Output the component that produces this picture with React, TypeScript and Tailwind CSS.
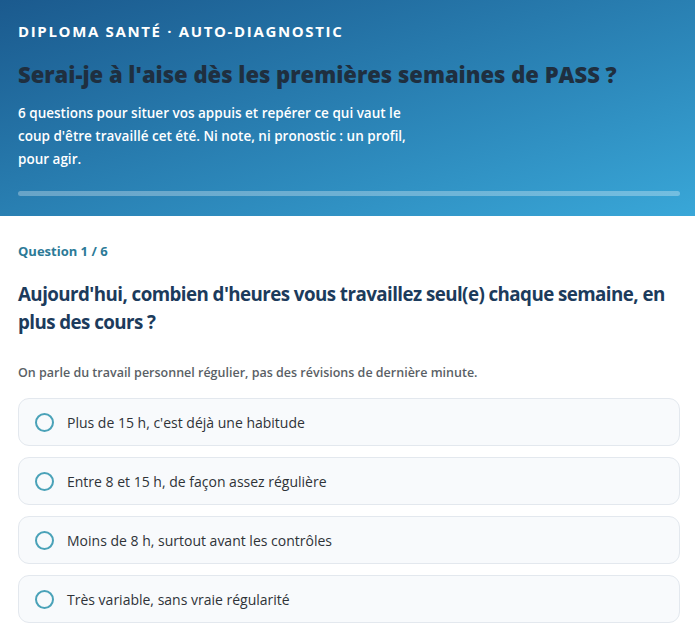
const options = [
  "Plus de 15 h, c'est déjà une habitude",
  'Entre 8 et 15 h, de façon assez régulière',
  'Moins de 8 h, surtout avant les contrôles',
  'Très variable, sans vraie régularité',
]

export default function App() {
  return (
    <div className="min-h-screen bg-white font-['Open_Sans',sans-serif]">
      <header className="h-[216px] bg-gradient-to-br from-[#1b5a8e] to-[#39a7d8] pl-[18px] pr-[15px] pt-[21px]">
        <div className="text-[15px] font-bold leading-5 tracking-[0.11em] text-white">
          DIPLOMA SANTÉ · AUTO-DIAGNOSTIC
        </div>
        <h1 className="mt-[19px] text-[22px] font-extrabold leading-7 text-[#1f2f3f]">
          Serai-je à l'aise dès les premières semaines de PASS ?
        </h1>
        <p className="mt-[14px] max-w-[400px] text-[13.5px] font-semibold leading-[23px] text-white">
          6 questions pour situer vos appuis et repérer ce qui vaut le coup d'être travaillé cet été. Ni note, ni
          pronostic : un profil, pour agir.
        </p>
        <div className="mt-[20px] h-[5px] rounded-full bg-white/30" />
      </header>

      <main className="pl-[18px] pr-[15px] pt-[26px]">
        <div className="text-[13px] font-bold text-[#2c7a97]">Question 1 / 6</div>
        <h2 className="mt-[18px] text-[18.75px] font-bold leading-[28px] tracking-[-0.03em] text-[#1c3b5c]">
          Aujourd'hui, combien d'heures vous travaillez seul(e) chaque semaine, en plus des cours ?
        </h2>
        <p className="mt-[28px] text-[12.5px] font-semibold text-[#5a5f66]">
          On parle du travail personnel régulier, pas des révisions de dernière minute.
        </p>
        <div className="mt-[16px] flex flex-col gap-[11px]">
          {options.map((o) => (
            <button
              key={o}
              className="flex h-[48px] items-center gap-[13px] rounded-[11px] border border-[#e3e8ee] bg-[#f8fafc] pl-[16px] text-left"
            >
              <span className="h-[19px] w-[19px] rounded-full border-2 border-[#4aa2b8]" />
              <span className="text-[14px] text-[#2f3338]">{o}</span>
            </button>
          ))}
        </div>
      </main>
    </div>
  )
}
